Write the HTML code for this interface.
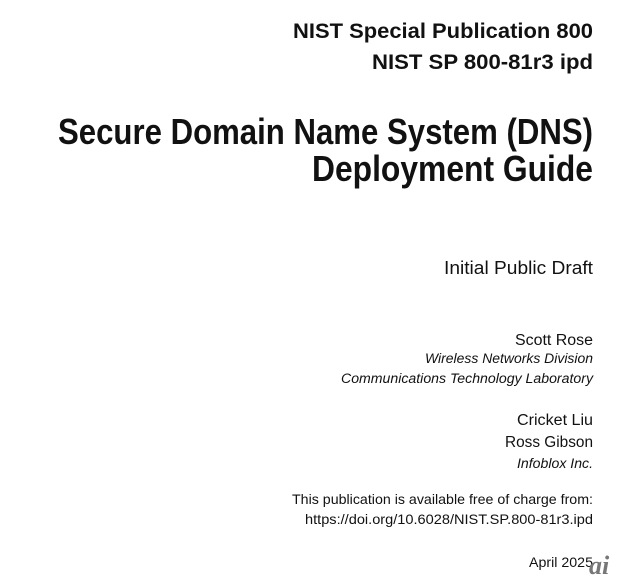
<!DOCTYPE html>
<html><head><meta charset="utf-8"><style>
html,body{margin:0;padding:0;background:#fff;width:620px;height:583px;overflow:hidden}
svg{display:block}
text{font-family:"Liberation Sans",sans-serif;fill:#111}
.b{font-weight:bold}
.i{font-style:italic}
</style></head><body>
<svg width="620" height="583" viewBox="0 0 620 583">
<text class="b" x="293" y="38" font-size="21" textLength="300" lengthAdjust="spacingAndGlyphs">NIST Special Publication 800</text>
<text class="b" x="372" y="69" font-size="21" textLength="221" lengthAdjust="spacingAndGlyphs">NIST SP 800-81r3 ipd</text>
<text class="b" x="58" y="144" font-size="36" textLength="535" lengthAdjust="spacingAndGlyphs">Secure Domain Name System (DNS)</text>
<text class="b" x="312" y="181" font-size="36" textLength="281" lengthAdjust="spacingAndGlyphs">Deployment Guide</text>
<text x="444" y="274" font-size="18" textLength="149" lengthAdjust="spacingAndGlyphs">Initial Public Draft</text>
<text x="515" y="345" font-size="15.5" textLength="78" lengthAdjust="spacingAndGlyphs">Scott Rose</text>
<text class="i" x="425" y="363" font-size="13.5" textLength="168" lengthAdjust="spacingAndGlyphs">Wireless Networks Division</text>
<text class="i" x="341" y="383" font-size="13.5" textLength="252" lengthAdjust="spacingAndGlyphs">Communications Technology Laboratory</text>
<text x="517" y="425" font-size="15.5" textLength="76" lengthAdjust="spacingAndGlyphs">Cricket Liu</text>
<text x="505" y="447" font-size="15.5" textLength="88" lengthAdjust="spacingAndGlyphs">Ross Gibson</text>
<text class="i" x="517" y="468" font-size="13.5" textLength="76" lengthAdjust="spacingAndGlyphs">Infoblox Inc.</text>
<text x="292" y="504" font-size="14" textLength="301" lengthAdjust="spacingAndGlyphs">This publication is available free of charge from:</text>
<text x="305" y="524" font-size="14" textLength="288" lengthAdjust="spacingAndGlyphs">https://doi.org/10.6028/NIST.SP.800-81r3.ipd</text>
<text x="529" y="567" font-size="14" textLength="64" lengthAdjust="spacingAndGlyphs">April 2025</text>
<text x="589" y="574" font-size="26" style="font-family:'Liberation Serif',serif;font-style:italic;font-weight:bold;fill:#777">ai</text>
</svg>
</body></html>
